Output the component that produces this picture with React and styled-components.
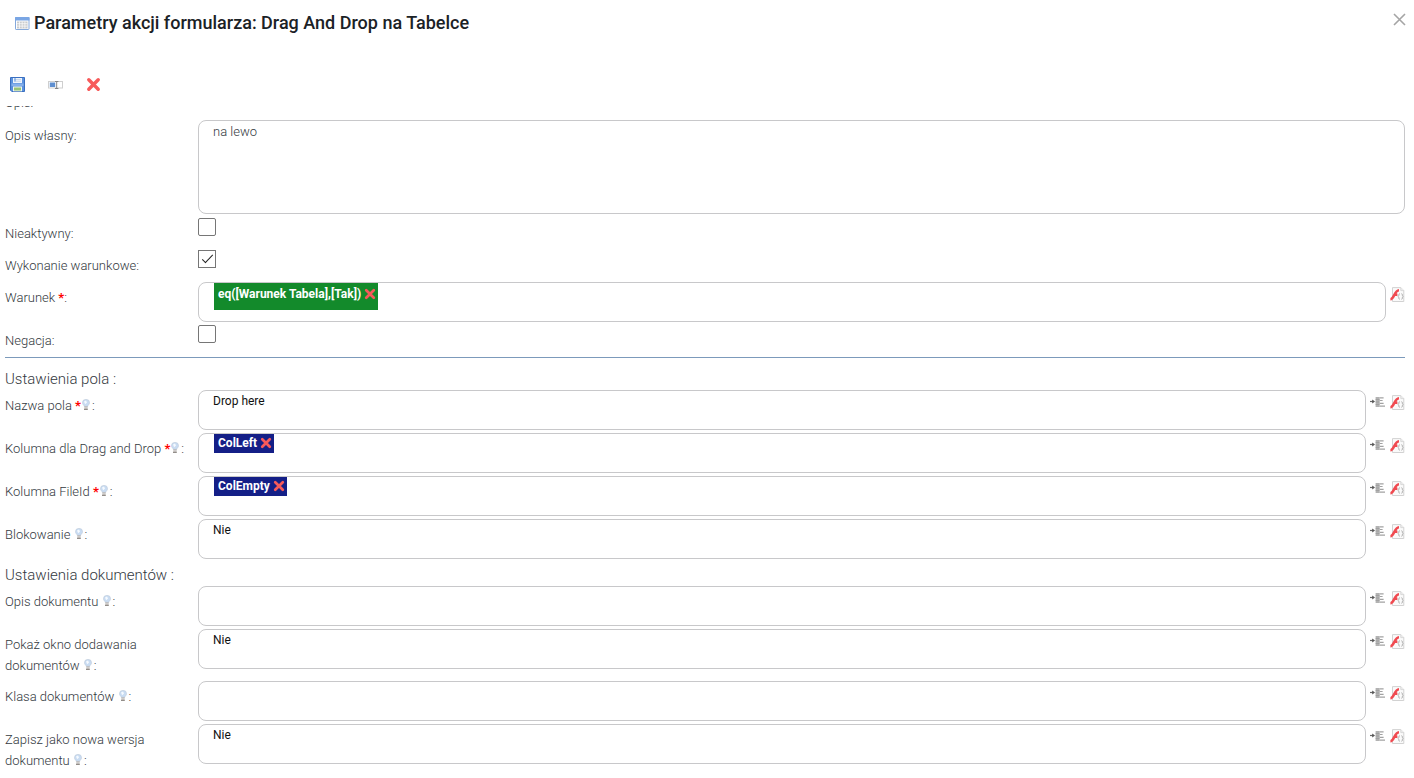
import React from "react";
import styled, { createGlobalStyle } from "styled-components";

const GlobalStyle = createGlobalStyle`
  *, *::before, *::after { box-sizing: border-box; }
  body {
    margin: 0;
    background: #fff;
    color: #33393e;
    font: 300 13px/21px Roboto, "Open Sans", sans-serif;
  }
`;

const Dialog = styled.main`
  display: flex;
  flex-direction: column;
`;

const Header = styled.header`
  display: flex;
  align-items: center;
  justify-content: space-between;
  padding: 8px 8px 8px 15px;
`;

const Title = styled.h1`
  display: flex;
  align-items: center;
  gap: 4px;
  margin: 0;
  color: #1b2226;
  font-size: 18px;
  font-weight: 500;
  line-height: 30px;
`;

const IconButton = styled.button`
  display: flex;
  flex: none;
  padding: 0;
  border: 0;
  background: none;
  cursor: pointer;
`;

const CloseButton = styled(IconButton)`
  align-self: flex-start;
  margin-top: 5px;
`;

const Toolbar = styled.div`
  display: flex;
  align-items: center;
  gap: 22px;
  height: 57px;
  padding: 20px 10px 0;
`;

const Form = styled.form`
  display: flex;
  flex-direction: column;
  padding: 0 9px 8px 5px;
`;

const ScrolledRow = styled.div`
  display: flex;
  align-items: flex-end;
  height: 7px;
  margin: 3px 0 7px;
  overflow: hidden;
`;

const Row = styled.div`
  display: grid;
  grid-template-columns: 193px minmax(0, 1fr);
  align-items: start;
  min-height: ${(p) => (p.$compact ? "32px" : "43px")};
`;

const Label = styled.label`
  padding: 5px 8px 5px 0;
`;

const Required = styled.span`
  color: #f00;
  font-weight: 700;
`;

const Control = styled.div`
  display: flex;
  align-items: flex-start;
  gap: 4px;
  padding-bottom: 3px;
`;

const boxed = `
  display: block;
  flex: 1;
  min-width: 0;
  border: 1px solid #c8c8ca;
  border-radius: 8px;
  background: #fff;
`;

const TextInput = styled.input`
  ${boxed}
  height: 40px;
  padding: 0 14px 18px;
  color: #111;
  font: 12px/20px Roboto, "Open Sans", sans-serif;
`;

const TextArea = styled.textarea`
  ${boxed}
  height: 94px;
  margin-bottom: 1px;
  padding: 0 14px;
  color: #33393e;
  font: 300 13px/21px Roboto, "Open Sans", sans-serif;
  resize: none;
`;

const TokenBox = styled.div`
  ${boxed}
  height: 40px;
  padding: 0 15px;
`;

const Token = styled.span`
  display: inline-flex;
  align-items: flex-start;
  gap: 3px;
  height: ${(p) => (p.$tall ? "27px" : "19px")};
  padding: 0 2px 0 4px;
  background: ${(p) => (p.$tall ? "#138a2b" : "#141f87")};
  color: #fff;
  font-size: 12px;
  font-weight: 700;
  line-height: ${(p) => (p.$tall ? "22px" : "18px")};
  vertical-align: top;
`;

const TokenRemove = styled(IconButton)`
  height: ${(p) => (p.$tall ? "22px" : "18px")};
  align-items: center;
`;

const CheckBox = styled.input`
  appearance: none;
  width: 18px;
  height: 18px;
  margin: 0;
  border: 1px solid #767676;
  border-radius: 2px;
  background: #fff;

  &:checked {
    display: grid;
    place-items: center;
    border-radius: 0;
  }

  &:checked::before {
    content: "";
    width: 11px;
    height: 5px;
    margin-bottom: 3px;
    border: solid #222;
    border-width: 0 0 1px 1px;
    transform: rotate(-46deg);
  }
`;

const ActionButton = styled(IconButton)`
  align-items: center;
  height: 16px;
  margin-top: 4px;
`;

const Divider = styled.hr`
  width: 100%;
  margin: 0;
  border: 0;
  border-top: 1px solid #7c9abb;
`;

const SectionTitle = styled.h2`
  margin: ${(p) => (p.$spaced ? "8px" : "0")} 0 0;
  padding-top: 2px;
  font-size: 15px;
  font-weight: 300;
  line-height: 22px;
`;

const HintIcon = styled.span`
  display: inline-flex;
  margin-right: 1px;
  vertical-align: baseline;
`;

const TableIcon = () => (
  <svg width="15" height="13" viewBox="0 0 15 13" aria-hidden="true">
    <rect x=".5" y=".5" width="13.500" height="12" rx=".6" fill="#fff" stroke="#84a8db" />
    <rect x="0" y="0" width="14.500" height="3.500" rx=".6" fill="#7aa6e4" />
    <rect x="2" y="4.500" width="10.500" height="7" fill="#c9cbcd" />
    <path d="M2 6.700h10.500M2 9.100h10.500M4.500 4.500v7M7.200 4.500v7M9.900 4.500v7" stroke="#fff" strokeWidth=".7" />
  </svg>
);

const CloseIcon = () => (
  <svg width="13" height="13" viewBox="0 0 13 13" aria-hidden="true">
    <path d="M1 1l11 11M12 1L1 12" stroke="#a5a5a5" strokeWidth="1.600" />
  </svg>
);

const SaveIcon = () => (
  <svg width="16" height="16" viewBox="0 0 16 16" aria-hidden="true">
    <path d="M.5.5h14v14H1.800L.5 13.200z" fill="#5b92de" stroke="#3a6fc0" />
    <rect x="3" y="1" width="9" height="5" fill="#eef4fc" />
    <path d="M4 2.500h7M4 4.200h7" stroke="#b9cbe3" strokeWidth=".7" />
    <rect x="4.500" y="1" width="1" height="3.500" fill="#5b92de" />
    <rect x="1.500" y="6.500" width="12" height="2.500" fill="#86b0ea" />
    <rect x="3" y="9.500" width="9" height="4.800" fill="#f4f8ee" />
    <rect x="4" y="10.500" width="7" height="3" fill="#98c477" />
  </svg>
);

const RenameIcon = () => (
  <svg width="16" height="10" viewBox="0 0 16 10" aria-hidden="true">
    <rect x=".5" y="1.500" width="14" height="6.500" fill="#fff" stroke="#cfcfcf" />
    <rect x="1.800" y="2.500" width="5.400" height="4.500" fill="#5f8fd0" />
    <path d="M7 1.500h3.400M8.700 1.500v7M7 8.500h3.400" stroke="#858585" fill="none" />
  </svg>
);

const CrossIcon = ({ size = 15 }) => (
  <svg width={size} height={size} viewBox="0 0 14 14" aria-hidden="true">
    <path d="M2.600 2.600l8.800 8.800M11.400 2.600l-8.800 8.800" stroke="#f75a5a" strokeWidth="3.200" strokeLinecap="round" />
  </svg>
);

const BulbIcon = () => (
  <svg width="10" height="11" viewBox="0 0 10 11" aria-hidden="true">
    <path d="M5 .4a3.400 3.300 0 0 1 3.500 3.300C8.500 5.600 6.900 6 6.700 7.400H3.300C3.100 6 1.500 5.600 1.500 3.700A3.400 3.300 0 0 1 5 .4z" fill="#c9dcf2" stroke="#c0cddc" strokeWidth=".7" />
    <path d="M3 2.600l2-1.200 1 2-1.800 1.800z" fill="#f6faff" />
    <path d="M3.300 7.900h3.400M3.300 9.100h3.400" stroke="#b5b1ad" />
    <path d="M3 10.300h3.800" stroke="#77716c" />
  </svg>
);

const MapIcon = () => (
  <svg width="16" height="12" viewBox="0 0 16 12" aria-hidden="true">
    <path d="M0 5.500h4" stroke="#666" strokeWidth="1.200" />
    <path d="M2.200 3.500L5 5.500 2.200 7.500z" fill="#555" />
    <rect x="5.600" y="1" width="4" height="10" fill="#b2b2b2" />
    <path d="M5.600 3.500h4M5.600 6h4M5.600 8.500h4" stroke="#999" strokeWidth=".7" />
    <path d="M9.600 1.800h4M9.600 4.500h3M9.600 7.300h4M9.600 10.200h5.400" stroke="#a2a2a2" strokeWidth="1.200" />
  </svg>
);

const FunctionIcon = () => (
  <svg width="15" height="15" viewBox="0 0 15 15" aria-hidden="true">
    <path d="M2.500.6h8.300l3 3v10.900H2.500z" fill="#fafafa" stroke="#d2d2d2" />
    <path d="M10.800.6v3h3" fill="#eee" stroke="#d2d2d2" strokeWidth=".8" />
    <path d="M.4 12.200C4.200 12.200 4.300 3.400 9 3.200M3.800 7.800h3.600" stroke="#f04a50" strokeWidth="2.500" fill="none" />
    <path d="M9.700 6.600c-1.300 0-.4 2.400-1.500 2.900 1.100.4.200 2.900 1.500 2.900M11.500 6.600c1.300 0 .4 2.400 1.500 2.900-1.100.4-.2 2.900-1.500 2.900" stroke="#b0b0b0" fill="none" />
  </svg>
);

const CheckRow = ({ id, label, checked }) => (
  <Row $compact>
    <Label htmlFor={id}>{label}:</Label>
    <CheckBox id={id} type="checkbox" defaultChecked={checked} />
  </Row>
);

const FieldRow = ({ id, label, value = "", token, required, hint = true, mapping = true, tall }) => (
  <Row>
    <Label as={token ? "span" : undefined} id={`${id}-label`} htmlFor={token ? undefined : id}>
      {label} {required && <Required>*</Required>}
      {hint && <HintIcon><BulbIcon /></HintIcon>}:
    </Label>
    <Control>
      {token ? (
        <TokenBox role="group" aria-labelledby={`${id}-label`}>
          <Token $tall={tall}>
            {token}
            <TokenRemove type="button" $tall={tall} aria-label={`Usuń ${token}`}>
              <CrossIcon size={12} />
            </TokenRemove>
          </Token>
        </TokenBox>
      ) : (
        <TextInput id={id} type="text" defaultValue={value} />
      )}
      {mapping && (
        <ActionButton type="button" aria-label={`Mapuj: ${label}`}>
          <MapIcon />
        </ActionButton>
      )}
      <ActionButton type="button" aria-label={`Funkcja: ${label}`}>
        <FunctionIcon />
      </ActionButton>
    </Control>
  </Row>
);

export default function App() {
  return (
    <>
      <GlobalStyle />
      <Dialog>
        <Header>
          <Title>
            <TableIcon />
            Parametry akcji formularza: Drag And Drop na Tabelce
          </Title>
          <CloseButton type="button" aria-label="Zamknij"><CloseIcon /></CloseButton>
        </Header>
        <Toolbar>
          <IconButton type="button" aria-label="Zapisz"><SaveIcon /></IconButton>
          <IconButton type="button" aria-label="Zmień nazwę"><RenameIcon /></IconButton>
          <IconButton type="button" aria-label="Usuń"><CrossIcon /></IconButton>
        </Toolbar>
        <Form>
          <ScrolledRow><span>Opis:</span></ScrolledRow>
          <Row>
            <Label htmlFor="own-description">Opis własny:</Label>
            <Control><TextArea id="own-description" defaultValue="na lewo" /></Control>
          </Row>
          <CheckRow id="inactive" label="Nieaktywny" />
          <CheckRow id="conditional" label="Wykonanie warunkowe" checked />
          <FieldRow id="condition" label="Warunek" required hint={false} mapping={false} tall token="eq([Warunek Tabela],[Tak])" />
          <CheckRow id="negation" label="Negacja" />
          <Divider />
          <SectionTitle $spaced>Ustawienia pola :</SectionTitle>
          <FieldRow id="field-name" label="Nazwa pola" required value="Drop here" />
          <FieldRow id="drop-column" label="Kolumna dla Drag and Drop" required token="ColLeft" />
          <FieldRow id="file-column" label="Kolumna FileId" required token="ColEmpty" />
          <FieldRow id="locking" label="Blokowanie" value="Nie" />
          <SectionTitle>Ustawienia dokumentów :</SectionTitle>
          <FieldRow id="doc-description" label="Opis dokumentu" />
          <FieldRow id="show-window" label="Pokaż okno dodawania dokumentów" value="Nie" />
          <FieldRow id="doc-class" label="Klasa dokumentów" />
          <FieldRow id="new-version" label="Zapisz jako nowa wersja dokumentu" value="Nie" />
        </Form>
      </Dialog>
    </>
  );
}
